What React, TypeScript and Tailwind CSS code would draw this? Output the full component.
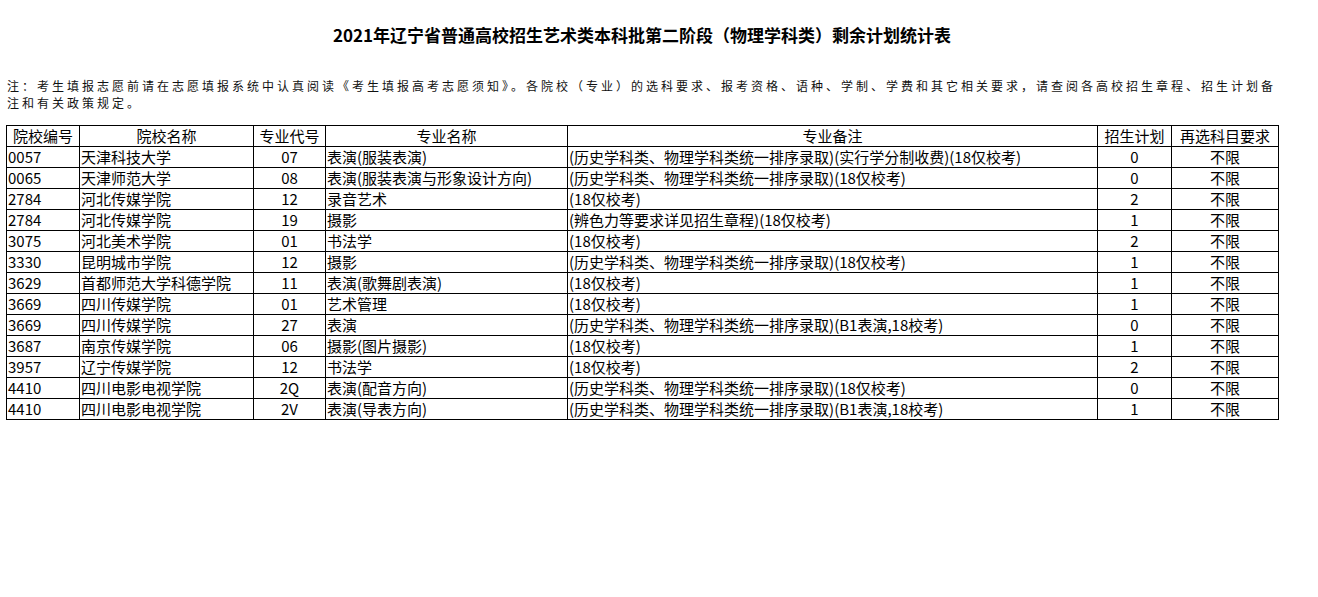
const FONT = { fontFamily: '"Noto Sans CJK SC", "Noto Sans", sans-serif' };

const HEAD = ["院校编号", "院校名称", "专业代号", "专业名称", "专业备注", "招生计划", "再选科目要求"];

const ROWS: string[][] = [
  ["0057", "天津科技大学", "07", "表演(服装表演)", "(历史学科类、物理学科类统一排序录取)(实行学分制收费)(18仅校考)", "0", "不限"],
  ["0065", "天津师范大学", "08", "表演(服装表演与形象设计方向)", "(历史学科类、物理学科类统一排序录取)(18仅校考)", "0", "不限"],
  ["2784", "河北传媒学院", "12", "录音艺术", "(18仅校考)", "2", "不限"],
  ["2784", "河北传媒学院", "19", "摄影", "(辨色力等要求详见招生章程)(18仅校考)", "1", "不限"],
  ["3075", "河北美术学院", "01", "书法学", "(18仅校考)", "2", "不限"],
  ["3330", "昆明城市学院", "12", "摄影", "(历史学科类、物理学科类统一排序录取)(18仅校考)", "1", "不限"],
  ["3629", "首都师范大学科德学院", "11", "表演(歌舞剧表演)", "(18仅校考)", "1", "不限"],
  ["3669", "四川传媒学院", "01", "艺术管理", "(18仅校考)", "1", "不限"],
  ["3669", "四川传媒学院", "27", "表演", "(历史学科类、物理学科类统一排序录取)(B1表演,18校考)", "0", "不限"],
  ["3687", "南京传媒学院", "06", "摄影(图片摄影)", "(18仅校考)", "1", "不限"],
  ["3957", "辽宁传媒学院", "12", "书法学", "(18仅校考)", "2", "不限"],
  ["4410", "四川电影电视学院", "2Q", "表演(配音方向)", "(历史学科类、物理学科类统一排序录取)(18仅校考)", "0", "不限"],
  ["4410", "四川电影电视学院", "2V", "表演(导表方向)", "(历史学科类、物理学科类统一排序录取)(B1表演,18校考)", "1", "不限"],
];

// columns that are centred in the data rows
const CENTER = [false, false, true, false, false, true, true];

export default function App() {
  return (
    <div className="min-h-screen bg-white text-black" style={FONT}>
      <div className="ml-[6px] w-[1272px] pt-[23px]">
        <h1 className="h-[24px] text-center text-[17px] font-bold leading-[24px]">
          2021年辽宁省普通高校招生艺术类本科批第二阶段（物理学科类）剩余计划统计表
        </h1>

        <p className="mt-[30px] whitespace-nowrap pl-[1px] text-[12px] leading-[17px] tracking-[3px] text-[#111]">
          注：考生填报志愿前请在志愿填报系统中认真阅读《考生填报高考志愿须知》。各院校（专业）的选科要求、报考资格、语种、学制、学费和其它相关要求，请查阅各高校招生章程、招生计划备
          <br />
          注和有关政策规定。
        </p>

        <table className="mt-[14px] w-[1272px] table-fixed border-collapse text-[15px] leading-[20px]">
          <colgroup>
            <col className="w-[73px]" />
            <col className="w-[174px]" />
            <col className="w-[72px]" />
            <col className="w-[242px]" />
            <col className="w-[530px]" />
            <col className="w-[74px]" />
            <col className="w-[107px]" />
          </colgroup>
          <thead>
            <tr>
              {HEAD.map((h) => (
                <th key={h} className="border border-black p-0 text-center font-normal whitespace-nowrap">
                  {h}
                </th>
              ))}
            </tr>
          </thead>
          <tbody>
            {ROWS.map((r, i) => (
              <tr key={i}>
                {r.map((c, j) => (
                  <td
                    key={j}
                    className={
                      CENTER[j]
                        ? "border border-black p-0 text-center whitespace-nowrap"
                        : "border border-black py-0 pl-[1px] pr-0 text-left whitespace-nowrap"
                    }
                  >
                    {c}
                  </td>
                ))}
              </tr>
            ))}
          </tbody>
        </table>
      </div>
    </div>
  );
}
